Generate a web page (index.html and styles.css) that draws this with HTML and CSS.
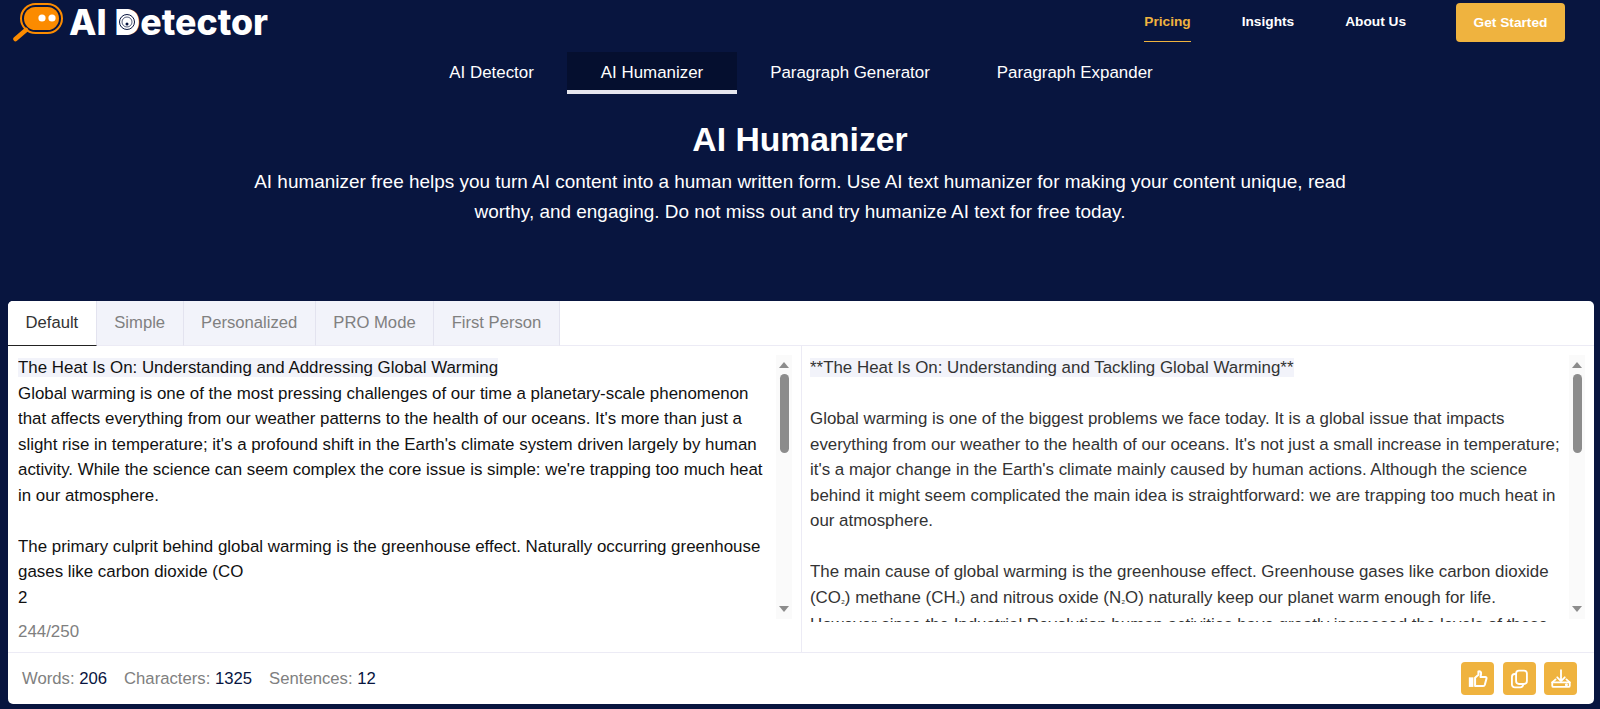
FILE: index.html
```html
<!DOCTYPE html>
<html lang="en">
<head>
<meta charset="utf-8">
<title>AI Humanizer</title>
<link rel="stylesheet" href="styles.css">
</head>
<body>
<header class="topbar">
  <a class="logo" href="#">
    <svg class="logo-mark" width="50" height="40" viewBox="0 0 50 40">
      <line x1="2.500" y1="36" x2="13" y2="27" stroke="#fb8b00" stroke-width="4.500" stroke-linecap="round"/>
      <rect x="8" y="1" width="41" height="29" rx="14.500" fill="none" stroke="#fb8b00" stroke-width="2"/>
      <rect x="11" y="4" width="35" height="23" rx="11.500" fill="#fb8b00"/>
      <circle cx="29" cy="15" r="3.600" fill="#fff"/>
      <circle cx="39" cy="15" r="3.600" fill="#fff"/>
    </svg>
    <span class="logo-text">AI <span class="logo-d">D<svg class="logo-d-mark" width="22" height="22" viewBox="0 0 22 22"><circle cx="11" cy="11" r="10" fill="#fff"/><circle cx="11" cy="11" r="7.500" fill="none" stroke="#08153f" stroke-width="1"/><circle cx="11" cy="11" r="5" fill="none" stroke="#08153f" stroke-width=".7"/><circle cx="11" cy="13" r="1.500" fill="#08153f"/></svg></span>etector</span>
  </a>
  <nav class="topnav">
    <a class="topnav-link is-active" href="#">Pricing</a>
    <a class="topnav-link" href="#">Insights</a>
    <a class="topnav-link" href="#">About Us</a>
    <a class="cta" href="#">Get Started</a>
  </nav>
</header>
<nav class="toolnav">
  <a class="tool" href="#">AI Detector</a>
  <a class="tool is-active" href="#">AI Humanizer</a>
  <a class="tool" href="#">Paragraph Generator</a>
  <a class="tool" href="#">Paragraph Expander</a>
</nav>
<section class="hero">
  <h1>AI Humanizer</h1>
  <p>AI humanizer free helps you turn AI content into a human written form. Use AI text humanizer for making your content unique, read worthy, and engaging. Do not miss out and try humanize AI text for free today.</p>
</section>
<main class="card">
  <div class="tabs">
    <button class="tab is-active">Default</button>
    <button class="tab">Simple</button>
    <button class="tab">Personalized</button>
    <button class="tab">PRO Mode</button>
    <button class="tab">First Person</button>
  </div>
  <div class="panes">
    <div class="pane pane-left">
      <div class="scroll-wrap">
        <div class="text">
          <span class="hl">The Heat Is On: Understanding and Addressing Global Warming</span><br>
          Global warming is one of the most pressing challenges of our time a planetary-scale phenomenon that affects everything from our weather patterns to the health of our oceans. It's more than just a slight rise in temperature; it's a profound shift in the Earth's climate system driven largely by human activity. While the science can seem complex the core issue is simple: we're trapping too much heat in our atmosphere.<br><br>
          The primary culprit behind global warming is the greenhouse effect. Naturally occurring greenhouse gases like carbon dioxide (CO<br>2
        </div>
        <div class="scrollbar"><span class="arrow up"></span><span class="track"><span class="thumb"></span></span><span class="arrow down"></span></div>
      </div>
      <div class="count">244/250</div>
    </div>
    <div class="pane pane-right">
      <div class="scroll-wrap">
        <div class="text muted">
          <span class="hl">**The Heat Is On: Understanding and Tackling Global Warming**</span><br><br>
          Global warming is one of the biggest problems we face today. It is a global issue that impacts everything from our weather to the health of our oceans. It's not just a small increase in temperature; it's a major change in the Earth's climate mainly caused by human actions. Although the science behind it might seem complicated the main idea is straightforward: we are trapping too much heat in our atmosphere.<br><br>
          The main cause of global warming is the greenhouse effect. Greenhouse gases like carbon dioxide (CO<span class="sub">₂</span>) methane (CH<span class="sub">₄</span>) and nitrous oxide (N<span class="sub">₂</span>O) naturally keep our planet warm enough for life. However since the Industrial Revolution human activities have greatly increased the levels of these
        </div>
        <div class="scrollbar"><span class="arrow up"></span><span class="track"><span class="thumb"></span></span><span class="arrow down"></span></div>
      </div>
    </div>
  </div>
  <footer class="stats">
    <div class="stat-list">
      <span class="stat">Words: <b>206</b></span>
      <span class="stat">Characters: <b>1325</b></span>
      <span class="stat">Sentences: <b>12</b></span>
    </div>
    <div class="actions">
      <button class="action" aria-label="Like">
        <svg width="20" height="20" viewBox="0 0 24 24" fill="none" stroke="#fff" stroke-width="2.400" stroke-linejoin="round" stroke-linecap="round"><rect x="1" y="10" width="5.500" height="11.500" fill="#fff" stroke="none"/><path d="M8.500 10.500 12.500 7V3c2.200-.6 3.500.8 3.200 2.800L15 9.500h5.700c1 0 1.800 1 1.500 2l-2 7.400c-.3 1-1 1.600-2 1.600H8.500z"/></svg>
      </button>
      <button class="action" aria-label="Copy">
        <svg width="20" height="20" viewBox="0 0 24 24" fill="none" stroke="#fff" stroke-width="2.200" stroke-linejoin="round"><rect x="8.500" y="2" width="13" height="16" rx="3.500"/><path d="M8.500 6H7a3.500 3.500 0 0 0-3.500 3.500v9A3.500 3.500 0 0 0 7 22h6.500a3.500 3.500 0 0 0 3.500-3.500V18"/></svg>
      </button>
      <button class="action" aria-label="Download">
        <svg width="20" height="20" viewBox="0 0 24 24" fill="none" stroke="#fff" stroke-width="2.200" stroke-linejoin="round" stroke-linecap="round"><path d="M12 1.500V14.500M7.500 10l4.500 4.500 4.500-4.500"/><path d="M5.500 12.500 1.500 16v4c0 1 .6 1.500 1.500 1.500h18c.9 0 1.500-.5 1.500-1.500v-4l-4-3.500"/><path d="M1.500 16h21"/><circle cx="18.500" cy="18.800" r=".7" fill="#fff"/></svg>
      </button>
    </div>
  </footer>
</main>
</body>
</html>
```
FILE: styles.css
```css
* { box-sizing: border-box; }
html, body { margin: 0; height: 100%; }
body {
  background: #08153f;
  color: #fff;
  font-family: "Liberation Sans", Arial, sans-serif;
  overflow: hidden;
  display: flex;
  flex-direction: column;
}
a { color: inherit; text-decoration: none; }
.topbar {
  height: 52px;
  flex: none;
  display: flex;
  justify-content: space-between;
  align-items: flex-start;
  padding: 0 35px 0 13px;
}
.logo { display: flex; align-items: flex-start; gap: 6px; padding-top: 3px; }
.logo-text {
  font-family: Inter, sans-serif;
  font-weight: 800;
  font-size: 35.700px;
  line-height: 38px;
  white-space: pre;
}
.logo-d { position: relative; display: inline-block; }
.logo-d-mark { position: absolute; left: 2px; top: 8px; }
.topnav { display: flex; align-items: flex-start; }
.topnav-link {
  font-size: 13.700px;
  font-weight: 700;
  line-height: 16px;
  padding: 14px 0 11px;
  margin-right: 51px;
  border-bottom: 1px solid transparent;
}
.topnav-link:nth-child(3) { margin-right: 50px; }
.topnav-link.is-active { color: #efb33f; border-bottom-color: #efb33f; }
.cta {
  margin-top: 3px;
  width: 109px;
  height: 39px;
  background: #efb33f;
  border-radius: 4px;
  font-size: 13.700px;
  font-weight: 700;
  display: flex;
  align-items: center;
  justify-content: center;
}
.toolnav { display: flex; justify-content: center; height: 42px; flex: none; padding-left: 2px; }
.tool {
  padding: 0 33.500px;
  font-size: 16.900px;
  line-height: 41px;
  height: 42px;
  border-bottom: 4px solid transparent;
}
.tool.is-active { background: #050f2f; border-bottom-color: #e6e6ee; }
.hero { height: 207px; flex: none; text-align: center; padding-top: 26px; }
.hero h1 { margin: 0; font-size: 33.700px; line-height: 38px; font-weight: 700; }
.hero p {
  margin: 9px auto 0;
  width: 1120px;
  font-size: 18.950px;
  line-height: 30px;
}
.card {
  margin: 0 6px 5px 8px;
  flex: 1;
  min-height: 0;
  background: #fff;
  border-radius: 5px;
  color: #111;
  display: flex;
  flex-direction: column;
  overflow: hidden;
}
.tabs {
  height: 45px;
  flex: none;
  display: flex;
  border-bottom: 1px solid #ecebf5;
}
.tab {
  border: 0;
  border-right: 1px solid #e3e3ef;
  border-bottom: 1px solid #ecebf5;
  background: #f2f3fa;
  color: #808080;
  font: 16.650px "Liberation Sans", Arial, sans-serif;
  padding: 0 17.500px;
  height: 45px;
}
.tab.is-active {
  background: #fff;
  color: #333;
  border-bottom: 1px solid #222;
}
.panes {
  flex: 1;
  min-height: 0;
  display: flex;
  border-bottom: 1px solid #ecebf5;
}
.pane { padding: 9px 0 0 10px; display: flex; flex-direction: column; min-width: 0; overflow: hidden; }
.pane-left { width: 794px; flex: none; border-right: 1px solid #ecebf5; }
.pane-right { flex: 1; padding-left: 8px; }
.scroll-wrap { height: 267px; display: flex; align-items: flex-start; flex: none; }
.text {
  flex: 1;
  min-width: 0;
  height: 267px;
  overflow: hidden;
  font-size: 16.900px;
  line-height: 25.500px;
  color: #111;
}
.text.muted { color: #333; padding-right: 4px; }
.hl { background: #f2f3fa; }
.sub { font-size: 10px; }
.scrollbar {
  width: 16px;
  height: 264px;
  flex: none;
  display: flex;
  flex-direction: column;
  align-items: center;
  background: #fafafa;
  margin-right: 9px;
}
.arrow { width: 0; height: 0; border-left: 5px solid transparent; border-right: 5px solid transparent; flex: none; }
.arrow.up { border-bottom: 6px solid #8c8c8c; margin-top: 7px; }
.arrow.down { border-top: 6px solid #8c8c8c; margin-bottom: 7px; }
.track { flex: 1; width: 100%; display: block; padding-top: 6px; }
.thumb { display: block; width: 9px; height: 79px; background: #8c8c8c; border-radius: 5px; margin: 0 auto; }
.count { color: #808080; font-size: 16.900px; line-height: 20px; }
.stats {
  flex: none;
  height: 51px;
  display: flex;
  justify-content: space-between;
  align-items: center;
  padding: 0 17px 0 14px;
}
.stat-list { display: flex; gap: 17px; }
.stat { color: #808080; font-size: 16.700px; }
.stat b { color: #08153f; font-weight: 400; }
.actions { display: flex; gap: 8.500px; }
.action {
  width: 33px;
  height: 33px;
  padding: 0;
  border: 0;
  border-radius: 4px;
  background: #efb33f;
  display: flex;
  align-items: center;
  justify-content: center;
}
```
